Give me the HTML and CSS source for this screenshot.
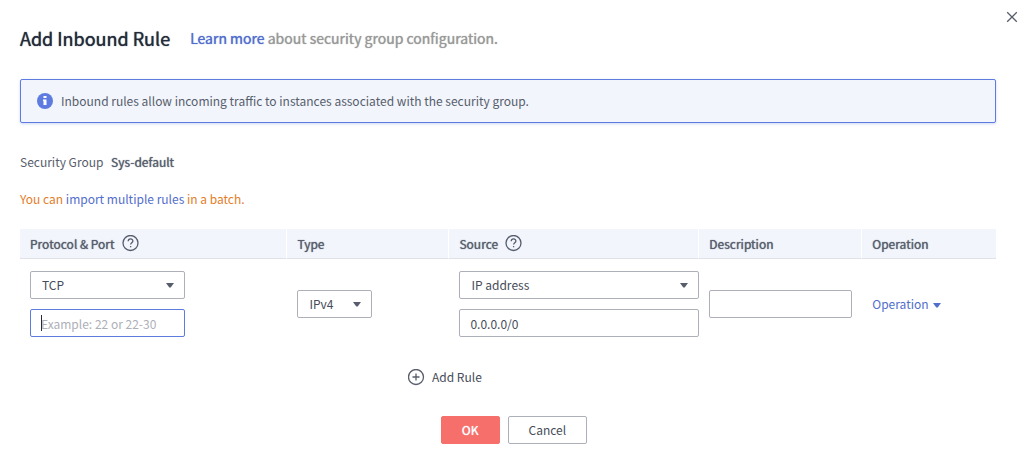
FILE: index.html
```html
<!DOCTYPE html>
<html lang="en">
  <head>
    <meta charset="UTF-8" />
    <meta name="viewport" content="width=device-width, initial-scale=1.0" />
    <link rel="stylesheet" href="styles.css">
    <title>Add Inbound Rule</title>
  </head>
  <body>
    <form class="dialog">
      <button type="button" class="close" aria-label="Close">
        <svg width="12" height="12" viewBox="0 0 12 12"><path d="M1.2 1.2 10.8 10.8M10.8 1.2 1.2 10.8" /></svg>
      </button>

      <header class="dialog-header">
        <h1>Add Inbound Rule</h1>
        <p><a href="#">Learn more</a> about security group configuration.</p>
      </header>

      <div class="notice">
        <svg width="16" height="16" viewBox="0 0 16 16">
          <circle cx="8" cy="8" r="8" fill="#5e7ce0" />
          <path d="M6.5 3h3v2h-3zM6 6.5h3.5V12h-3V8H6z" fill="#fff" />
        </svg>
        <p>Inbound rules allow incoming traffic to instances associated with the security group.</p>
      </div>

      <p class="group">Security Group <strong>Sys-default</strong></p>
      <p class="batch">You can <a href="#">import multiple rules</a> in a batch.</p>

      <table class="rules">
        <colgroup>
          <col class="col-port">
          <col class="col-type">
          <col class="col-source">
          <col class="col-desc">
          <col class="col-operation">
        </colgroup>
        <thead>
          <tr>
            <th>
              <div class="th-label">Protocol &amp; Port
                <svg class="icon" width="17" height="17" viewBox="0 0 17 17">
                  <circle cx="8.5" cy="8" r="7.5" />
                  <path d="M6.2 6.3c0-3.2 4.7-3 4.7-.3 0 1.7-2.3 1.8-2.3 3.6M8.6 10.9v1.4" />
                </svg>
              </div>
            </th>
            <th>Type</th>
            <th>
              <div class="th-label">Source
                <svg class="icon" width="17" height="17" viewBox="0 0 17 17">
                  <circle cx="8.5" cy="8" r="7.5" />
                  <path d="M6.2 6.3c0-3.2 4.7-3 4.7-.3 0 1.7-2.3 1.8-2.3 3.6M8.6 10.9v1.4" />
                </svg>
              </div>
            </th>
            <th>Description</th>
            <th>Operation</th>
          </tr>
        </thead>
        <tbody>
          <tr>
            <td>
              <div class="fields port-fields">
                <div class="select">
                  <select aria-label="Protocol"><option>TCP</option></select>
                  <svg width="8" height="5" viewBox="0 0 8 5"><path d="M0 0h8L4.7 4.5H3.3z" /></svg>
                </div>
                <div class="port">
                  <input type="text" aria-label="Port" placeholder="Example: 22 or 22-30">
                  <span class="caret"></span>
                </div>
              </div>
            </td>
            <td>
              <div class="select type-select">
                <select aria-label="Type"><option>IPv4</option></select>
                <svg width="8" height="5" viewBox="0 0 8 5"><path d="M0 0h8L4.7 4.5H3.3z" /></svg>
              </div>
            </td>
            <td class="source">
              <div class="fields">
                <div class="select">
                  <select aria-label="Source"><option>IP address</option></select>
                  <svg width="8" height="5" viewBox="0 0 8 5"><path d="M0 0h8L4.7 4.5H3.3z" /></svg>
                </div>
                <input type="text" aria-label="Source address" value="0.0.0.0/0">
              </div>
            </td>
            <td><input type="text" aria-label="Description"></td>
            <td>
              <a href="#" class="operation">Operation
                <svg width="8" height="8" viewBox="0 0 8 8"><path d="M0 3h8L4.7 7.5H3.3z" /></svg>
              </a>
            </td>
          </tr>
        </tbody>
      </table>

      <button type="button" class="add-rule">
        <svg class="icon" width="17" height="17" viewBox="0 0 17 17">
          <circle cx="8" cy="8" r="7.5" />
          <path d="M4.5 8h7M8 4.5v7" />
        </svg>
        Add Rule
      </button>

      <footer class="actions">
        <button type="submit" class="btn btn-primary">OK</button>
        <button type="button" class="btn">Cancel</button>
      </footer>
    </form>
  </body>
</html>
```
FILE: styles.css
```css
* {
  box-sizing: border-box;
}
body {
  margin: 0;
  background-color: #fff;
  color: #575d6c;
  font-family: "Noto Sans CJK SC", "Noto Sans", sans-serif;
  font-size: 12px;
  line-height: 20px;
}
h1,
p {
  margin: 0;
}
a {
  color: #526ecc;
  text-decoration: none;
}
button,
input,
select {
  font: inherit;
  color: #464c59;
}
button {
  cursor: pointer;
}
h1,
strong,
.dialog-header p,
.rules th,
.btn-primary {
  font-weight: 400;
  text-shadow: 0 0 1px currentColor;
}
.dialog {
  position: relative;
  padding: 24px 32px 16px 20px;
}
.close {
  position: absolute;
  top: 11px;
  right: 10px;
  display: flex;
  padding: 0;
  border: none;
  background: none;
}
.close path {
  stroke: #575d6c;
  stroke-width: 1.3;
}
.dialog-header {
  display: flex;
  align-items: center;
  gap: 20px;
  height: 28px;
}
.dialog-header h1 {
  color: #252b3a;
  font-size: 18px;
}
.dialog-header p {
  color: #999;
  font-size: 14px;
}
.notice {
  display: flex;
  align-items: center;
  gap: 8px;
  margin-top: 27px;
  padding: 11px 16px;
  border: 1px solid #5e7ce0;
  border-radius: 2px;
  background-color: #f2f5fc;
  box-shadow: 0 1px 3px rgba(94, 124, 224, 0.3);
}
.group {
  margin-top: 29px;
}
.group strong {
  margin-left: 5px;
}
.batch {
  margin-top: 17px;
  color: #e37d29;
}
.rules {
  width: 100%;
  margin-top: 20px;
  border-collapse: separate;
  border-spacing: 0;
  table-layout: fixed;
}
.col-port {
  width: 27.4%;
}
.col-type {
  width: 16.6%;
}
.col-source {
  width: 25.6%;
}
.col-desc {
  width: 16.7%;
}
.rules th {
  height: 30px;
  padding: 0 10px;
  border-right: 1px solid #fff;
  border-bottom: 1px solid #dfe1e6;
  background-color: #f2f5fc;
  text-align: left;
}
.rules th:last-child {
  border-right: none;
}
.rules td {
  padding: 12px 10px;
}
.rules td.source {
  padding-right: 0;
}
.th-label {
  display: flex;
  align-items: center;
  gap: 7px;
}
.icon {
  fill: none;
  stroke: #575d6c;
  stroke-width: 1.3;
}
.fields {
  display: grid;
  gap: 10px;
}
.port-fields {
  width: 155px;
}
.type-select {
  width: 75px;
}
.select,
.port {
  position: relative;
}
.select svg {
  position: absolute;
  top: 12px;
  right: 11px;
  fill: #575d6c;
  pointer-events: none;
}
.rules select,
.rules input {
  display: block;
  width: 100%;
  height: 28px;
  padding: 0 10px;
  border: 1px solid #adb0b8;
  border-radius: 2px;
  outline: none;
  background-color: #fff;
  appearance: none;
}
.rules select {
  padding-left: 11px;
}
.rules .port input,
.rules input:focus {
  border-color: #5e7ce0;
}
.rules input::placeholder {
  color: #adb0b8;
}
.caret {
  position: absolute;
  top: 6px;
  left: 11px;
  width: 1px;
  height: 16px;
  background-color: #252b3a;
}
.operation {
  display: flex;
  align-items: center;
  gap: 4px;
}
.operation svg {
  fill: #526ecc;
}
.add-rule {
  display: flex;
  align-items: center;
  gap: 7px;
  margin: 18px auto 0 388px;
  padding: 0;
  border: none;
  background: none;
}
.actions {
  display: flex;
  justify-content: center;
  gap: 8px;
  margin: 29px -12px 0 0;
}
.btn {
  height: 28px;
  padding: 0 20px;
  border: 1px solid #adb0b8;
  border-radius: 2px;
  background-color: #fff;
}
.btn-primary {
  border-color: #f66f6a;
  background-color: #f66f6a;
  color: #fff;
}
```
